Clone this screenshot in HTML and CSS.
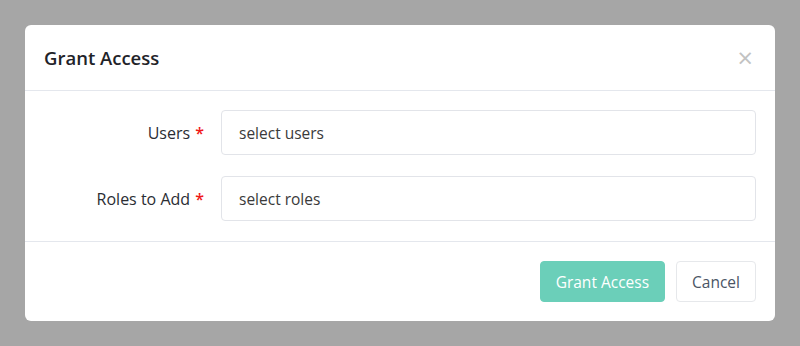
FILE: index.html
```html
<!DOCTYPE html>
<html lang="en">
<head>
    <meta charset="UTF-8">
    <title>Grant Access</title>
    <link rel="stylesheet" href="styles.css">
</head>
<body>
    <div class="modal">
        <div class="modal-header">
            <h2>Grant Access</h2>
            <span class="close">&times;</span>
        </div>
        <form class="modal-body">
            <div class="form-row">
                <label for="users">Users <i>*</i></label>
                <input type="text" id="users" placeholder="select users">
            </div>
            <div class="form-row">
                <label for="roles">Roles to Add <i>*</i></label>
                <input type="text" id="roles" placeholder="select roles">
            </div>
        </form>
        <div class="modal-footer">
            <button class="btn btn-primary">Grant Access</button>
            <button class="btn">Cancel</button>
        </div>
    </div>
</body>
</html>
```

FILE: styles.css
```css
* {
    box-sizing: border-box;
}

body {
    margin: 0;
    padding: 25px;
    background: #a6a6a6;
    font-family: "Open Sans", "Noto Sans", sans-serif;
    color: #1f2d3d;
}

.modal {
    background: white;
    border-radius: 6px;
    height: 296px;
}

.modal-header {
    display: flex;
    align-items: center;
    justify-content: space-between;
    height: 66px;
    padding: 0 22px 0 19px;
    border-bottom: 1px solid #e4e7ed;
}

.modal-header h2 {
    margin: 0;
    font-size: 18.5px;
    font-weight: 600;
    color: #1f2329;
}

.close {
    font-size: 27px;
    line-height: 1;
    color: #c2c2c2;
}

.modal-body {
    display: flex;
    flex-direction: column;
    gap: 21px;
    padding: 19px 19px 20px 20px;
    margin: 0;
    border-bottom: 1px solid #e4e7ed;
}

.form-row {
    display: flex;
    align-items: center;
}

.form-row label {
    width: 176px;
    padding-right: 17px;
    text-align: right;
    font-size: 16px;
    font-weight: 500;
    color: #2a2d33;
}

.form-row label i {
    font-style: normal;
    font-weight: 600;
    color: #f01818;
    margin-left: 1px;
}

.form-row input {
    flex: 1;
    height: 45px;
    padding: 0 17px;
    border: 1px solid #e2e4e9;
    border-radius: 4px;
    font-family: inherit;
    font-size: 15.5px;
    color: #333;
}

.form-row input::placeholder {
    color: #3a3a3a;
}

.modal-footer {
    display: flex;
    justify-content: flex-end;
    gap: 11px;
    padding: 19px 19px;
}

.btn {
    height: 41px;
    padding: 0 15px;
    background: white;
    border: 1px solid #e6e8eb;
    border-radius: 4px;
    font-family: inherit;
    font-size: 15.5px;
    color: #4a5565;
}

.btn-primary {
    background: #6bcfb9;
    border-color: #6bcfb9;
    color: white;
}
```
